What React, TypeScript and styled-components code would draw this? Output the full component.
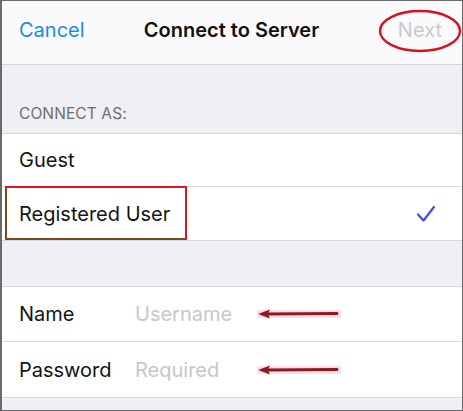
import React from "react";
import styled, { createGlobalStyle } from "styled-components";

const Global = createGlobalStyle`
  html, body { margin: 0; padding: 0; background: #ffffff; }
  * { box-sizing: border-box; }
  body { font-family: Inter, "Liberation Sans", sans-serif; -webkit-font-smoothing: antialiased; }
`;

const Frame = styled.div`
  width: 463px;
  height: 411px;
  border: 1px solid #6a6a6a;
  border-left-width: 2px;
  background: #efeff4;
  display: flex;
  flex-direction: column;
  overflow: hidden;
`;

const NavBar = styled.header`
  position: relative;
  height: 64px;
  background: #fafafc;
  border-bottom: 1px solid #d6d6da;
  display: grid;
  grid-template-columns: 1fr auto 1fr;
  align-items: center;
  padding: 0 20px 6px 17px;
  flex-shrink: 0;
`;

const NavButton = styled.span<{ $disabled?: boolean; $align: "left" | "right" }>`
  font-size: 20px;
  color: ${(p) => (p.$disabled ? "#c9c9ce" : "#1b8ae6")};
  justify-self: ${(p) => (p.$align === "left" ? "start" : "end")};
  position: relative;
`;

const Title = styled.h1`
  margin: 0 0 0 2px;
  font-size: 20px;
  font-weight: 600;
  color: #111;
`;

const Ellipse = styled.svg`
  position: absolute;
  left: -20px;
  top: -9px;
  overflow: visible;
`;

const SectionGap = styled.div<{ $h: number }>`
  height: ${(p) => p.$h}px;
  flex-shrink: 0;
  display: flex;
  align-items: flex-end;
  padding: 0 17px 10px;
`;

const SectionLabel = styled.span`
  font-size: 15.5px;
  color: #6d6d72;
  letter-spacing: 0.1px;
`;

const Group = styled.section`
  background: #fff;
  border-top: 1px solid #d8d8dc;
  border-bottom: 1px solid #d8d8dc;
  flex-shrink: 0;
`;

const Row = styled.div<{ $h: number; $last?: boolean }>`
  position: relative;
  height: ${(p) => p.$h}px;
  display: flex;
  align-items: center;
  padding: 0 26px 0 17px;
  border-bottom: ${(p) => (p.$last ? "none" : "1px solid #dcdce0")};
`;

const RowText = styled.span`
  font-size: 20px;
  color: #141414;
  flex: 1;
`;

const FieldLabel = styled.span`
  font-size: 20px;
  color: #141414;
  width: 116px;
`;

const Placeholder = styled.span`
  font-size: 20px;
  color: #c7c7cc;
  width: 122px;
`;

const Highlight = styled.div`
  position: absolute;
  left: 3px;
  top: -1px;
  width: 182px;
  height: 54px;
  border: 2px solid #e0141c;
  border-bottom-color: #7a4a1c;
  border-left-color: #7a4a1c;
  pointer-events: none;
`;

const Arrow = styled.svg`
  display: block;
`;

const Fill = styled.div`
  flex: 1;
`;

const Check = () => (
  <svg width="20" height="18" viewBox="0 0 20 18">
    <path d="M2 9.5 L7.5 15.5 L18 2" fill="none" stroke="#3f4ede" strokeWidth="2.2" strokeLinecap="round" strokeLinejoin="round" />
  </svg>
);

const RedArrow = () => (
  <Arrow width="84" height="12" viewBox="0 0 84 12">
    <rect x="0" y="2" width="84" height="8" fill="#fbdcf3" />
    <path d="M8 6 L80 5.4" stroke="#8e1c1c" strokeWidth="3" strokeLinecap="round" />
    <path d="M1 6 L13 1.5 L11 6 L13 10.5 Z" fill="#8e1c1c" />
  </Arrow>
);

export default function App() {
  return (
    <>
      <Global />
      <Frame>
        <NavBar>
          <NavButton $align="left">Cancel</NavButton>
          <Title>Connect to Server</Title>
          <NavButton $align="right" $disabled>
            Next
            <Ellipse width="84" height="44" viewBox="0 0 84 44">
              <ellipse cx="42" cy="22" rx="40" ry="20" fill="none" stroke="#d4121e" strokeWidth="2.4" />
            </Ellipse>
          </NavButton>
        </NavBar>
        <SectionGap $h={68}>
          <SectionLabel>CONNECT AS:</SectionLabel>
        </SectionGap>
        <Group>
          <Row $h={53}>
            <RowText>Guest</RowText>
          </Row>
          <Row $h={53} $last>
            <RowText>Registered User</RowText>
            <Check />
            <Highlight />
          </Row>
        </Group>
        <SectionGap $h={45} />
        <Group>
          <Row $h={55}>
            <FieldLabel>Name</FieldLabel>
            <Placeholder>Username</Placeholder>
            <RedArrow />
            <Fill />
          </Row>
          <Row $h={55} $last>
            <FieldLabel>Password</FieldLabel>
            <Placeholder>Required</Placeholder>
            <RedArrow />
            <Fill />
          </Row>
        </Group>
      </Frame>
    </>
  );
}
